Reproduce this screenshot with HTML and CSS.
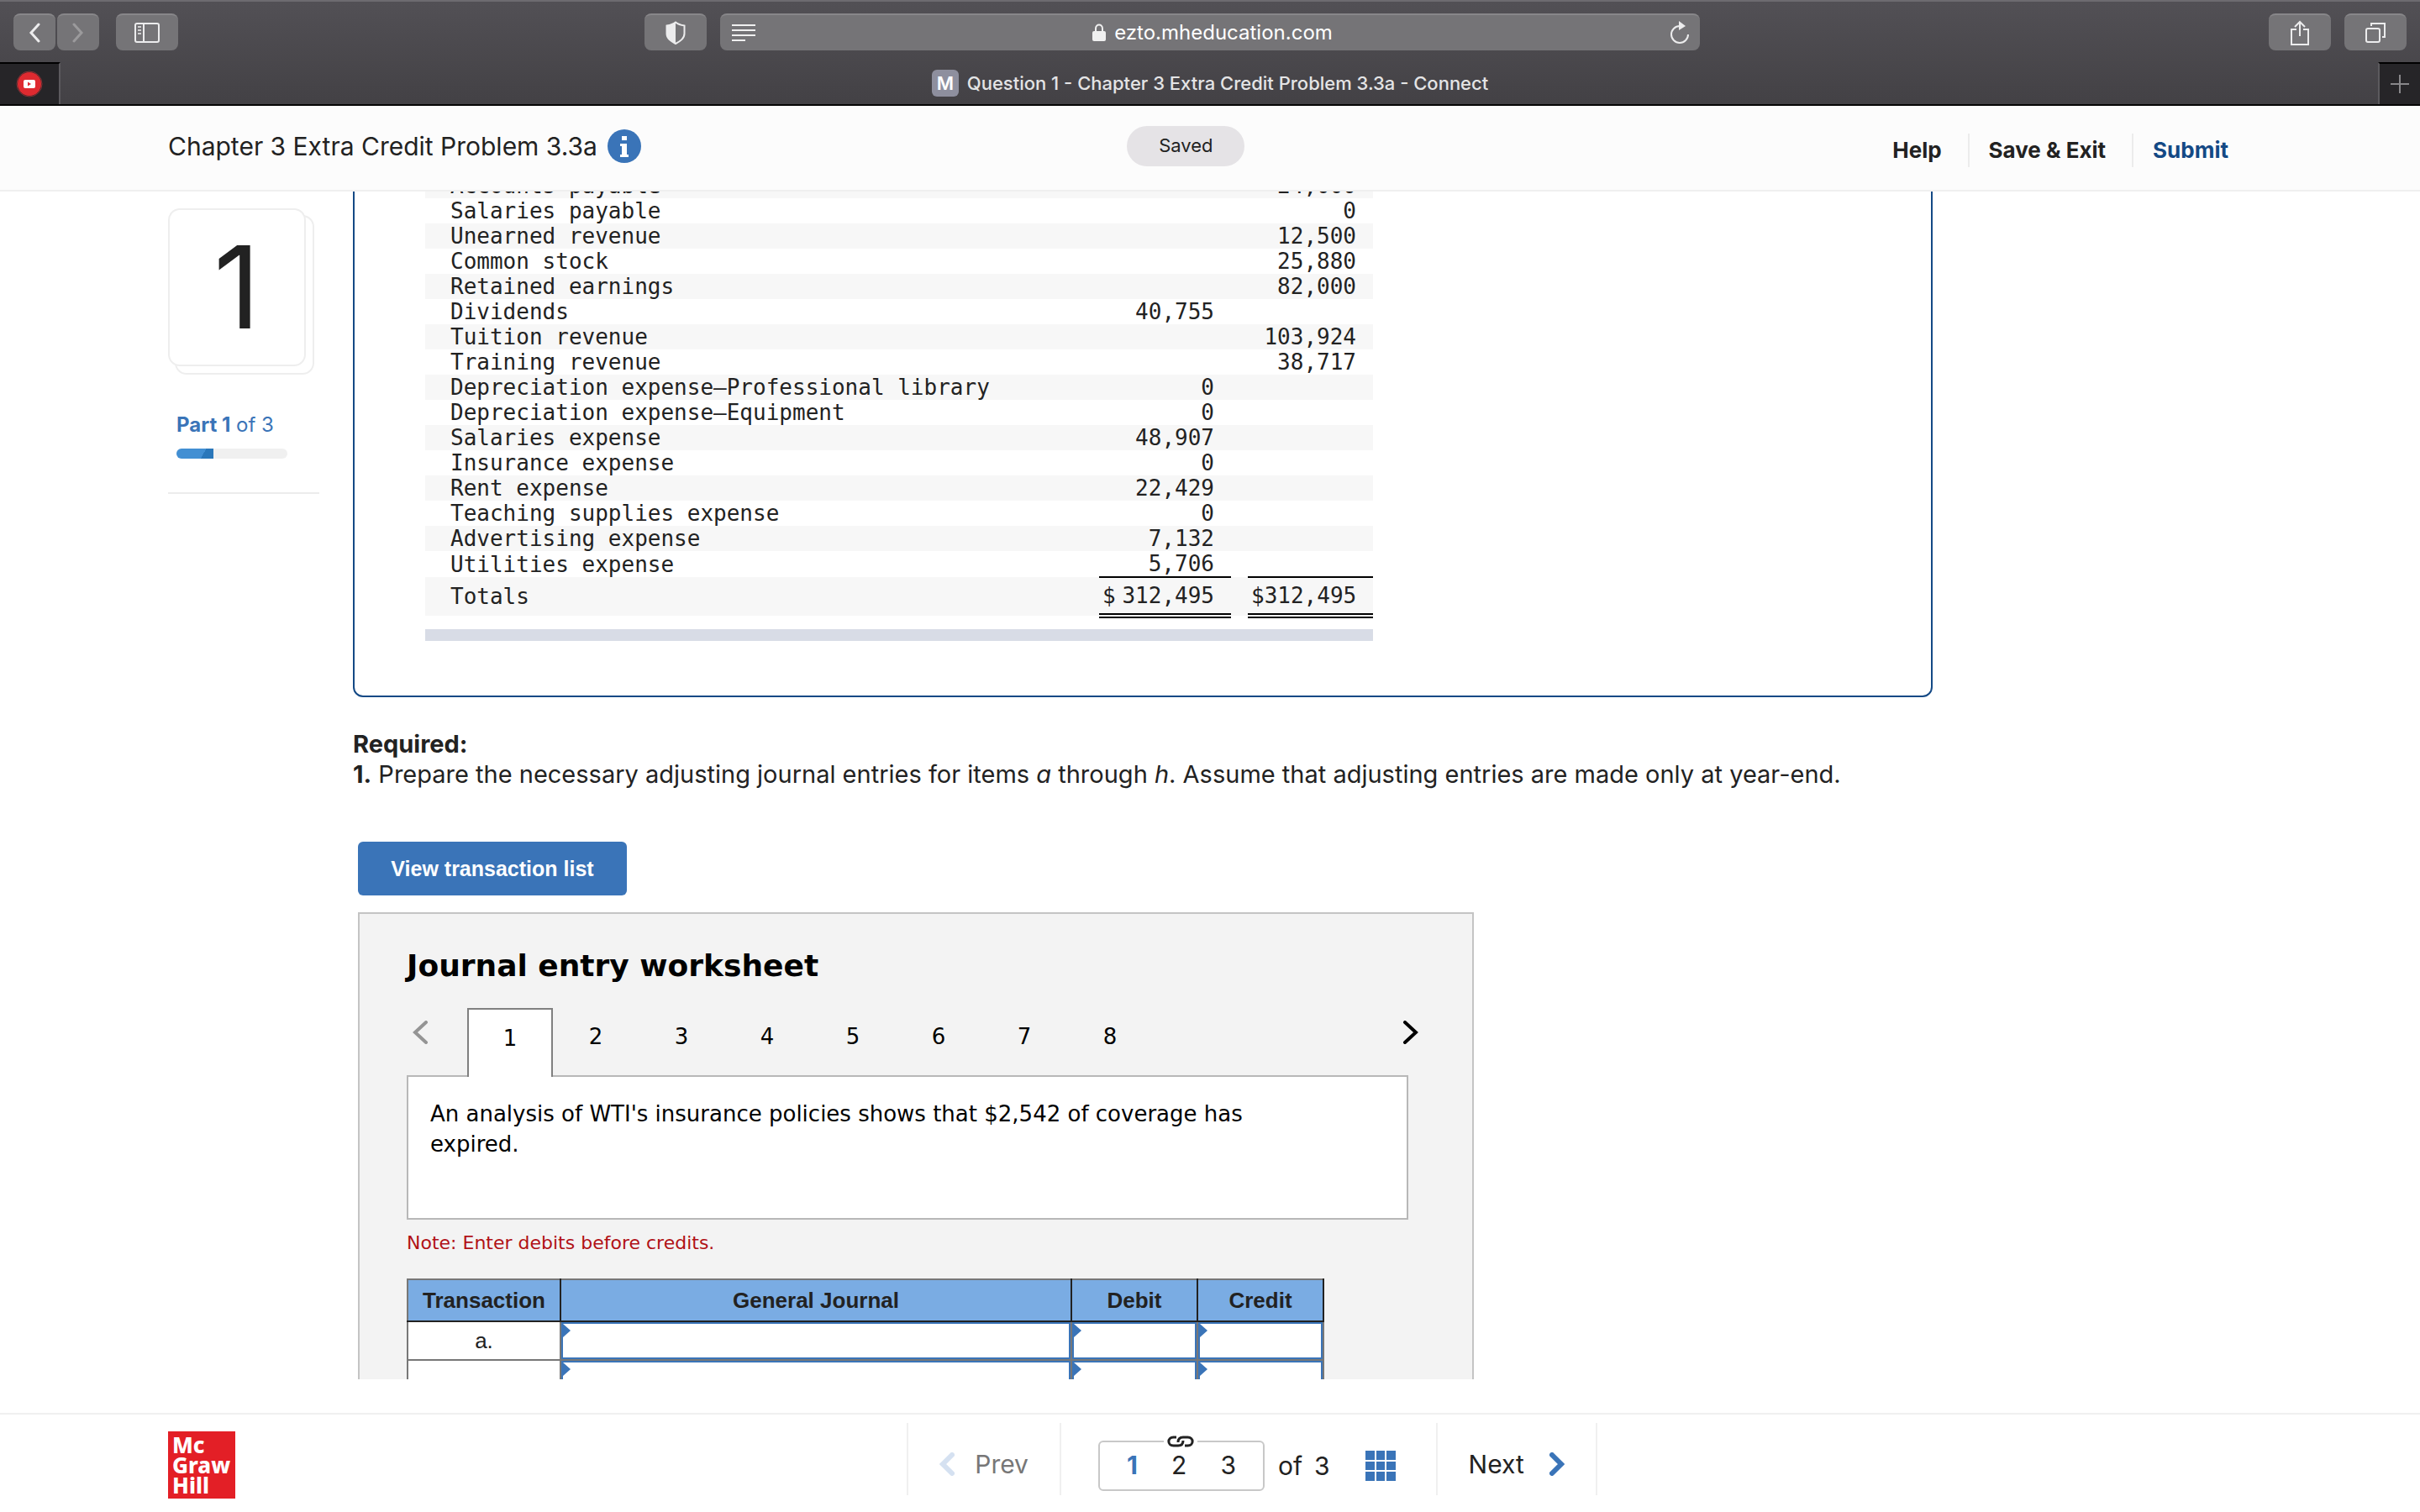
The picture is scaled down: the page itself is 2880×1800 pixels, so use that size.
FILE: index.html
```html
<!DOCTYPE html>
<html lang="en">
<head>
<meta charset="utf-8">
<title>Question 1 - Chapter 3 Extra Credit Problem 3.3a - Connect</title>
<link rel="stylesheet" href="styles.css">
</head>
<body>
<div class="chrome">
  <div class="toolbar">
    <div class="tools">
      <div class="pair">
        <button class="tool tool-small" aria-label="Back"><svg width="14" height="24" viewBox="0 0 14 24"><path d="M12 2L3 12l9 10" fill="none" stroke="#ececed" stroke-width="3" stroke-linecap="round"/></svg></button>
        <button class="tool tool-small" aria-label="Forward"><svg width="14" height="24" viewBox="0 0 14 24"><path d="M2 2l9 10-9 10" fill="none" stroke="#9b9a9c" stroke-width="3" stroke-linecap="round"/></svg></button>
      </div>
      <button class="tool" aria-label="Sidebar"><svg width="30" height="24" viewBox="0 0 30 24"><g fill="none" stroke="#ececed" stroke-width="2"><rect x="1" y="1" width="28" height="22" rx="2"/><path d="M11 1v22"/></g><path d="M4 5h4M4 9h4M4 13h4" stroke="#d0d0d1" stroke-width="2"/></svg></button>
      <button class="tool tool-end" aria-label="Privacy report"><svg width="24" height="28" viewBox="0 0 24 28"><path d="M12 1.500C15 4 19 5 22.500 5.500V15c0 6-5 9-10.500 12C6.500 24 1.500 21 1.500 15V5.500C5 5 9 4 12 1.500z" fill="none" stroke="#ececed" stroke-width="2"/><path d="M12 1.500V27C6.500 24 1.500 21 1.500 15V5.500C5 5 9 4 12 1.500z" fill="#ececed"/></svg></button>
    </div>
    <div class="address">
      <svg width="28" height="20" viewBox="0 0 28 20"><path d="M0 1h28M0 7h28M0 13h28M0 19h16" stroke="#f0f0f0" stroke-width="2"/></svg>
      <span class="host"><svg width="16" height="22" viewBox="0 0 16 22"><rect y="9" width="16" height="12" rx="2" fill="#f0f0f0"/><path d="M4 10V6c0-6 8-6 8 0v4" fill="none" stroke="#f0f0f0" stroke-width="2"/></svg>ezto.mheducation.com</span>
      <svg width="24" height="28" viewBox="0 0 24 28"><path d="M12 6a10 10 0 1 0 10 10" fill="none" stroke="#ececed" stroke-width="2"/><path d="M11 0l8 6-8 5z" fill="#ececed"/></svg>
    </div>
    <div class="tools tools-right">
      <button class="tool" aria-label="Share"><svg width="24" height="32" viewBox="0 0 24 32"><g fill="none" stroke="#ececed" stroke-width="2"><path d="M8 12H2v18h20V12h-6"/><path d="M12 20V3M6 9l6-6 6 6"/></g></svg></button>
      <button class="tool" aria-label="Tabs"><svg width="26" height="26" viewBox="0 0 26 26"><g fill="none" stroke="#ececed" stroke-width="2"><rect x="2" y="8" width="16" height="16" rx="2"/><path d="M8 5V2h16v16h-3"/></g></svg></button>
    </div>
  </div>
  <div class="tabbar">
    <div class="pinned"><svg width="32" height="32" viewBox="0 0 32 32"><circle cx="16" cy="16" r="15" fill="none" stroke="#8a3236" stroke-width="1"/><circle cx="16" cy="16" r="14" fill="#de2a30"/><rect x="9" y="11" width="14" height="10" rx="2" fill="#fff"/><path d="M14 13.500v5l4-2.500z" fill="#de2a30"/></svg></div>
    <div class="tab"><span class="favicon">M</span>Question 1 - Chapter 3 Extra Credit Problem 3.3a - Connect</div>
    <button class="newtab" aria-label="New tab"><svg width="22" height="22" viewBox="0 0 22 22"><path d="M11 0v22M0 11h22" stroke="#88878a" stroke-width="2"/></svg></button>
  </div>
</div>

<header class="header">
  <h1 class="title">Chapter 3 Extra Credit Problem 3.3a
    <svg width="40" height="40" viewBox="0 0 40 40"><circle cx="20" cy="20" r="20" fill="#3a74b8"/><path d="M17 8h6v5h-6zM15 17h8v13h2v3H15v-3h2V20h-2z" fill="#fff"/></svg></h1>
  <span class="saved">Saved</span>
  <nav class="links"><a href="#help">Help</a><a href="#save">Save &amp; Exit</a><a href="#submit" class="submit">Submit</a></nav>
</header>

<main class="main">
  <aside class="side">
    <div class="stack"><div class="number">1</div></div>
    <div class="part">
      <p><b>Part 1</b> of 3</p>
      <div class="track"><div class="fill"></div></div>
    </div>
  </aside>
  <div class="content">
    <section class="sheet">
      <table class="trial">
        <colgroup><col><col class="c-debit"><col class="c-gap"><col class="c-credit"></colgroup>
        <tbody>
        <tr><th>Accounts payable</th><td></td><td></td><td>24,000</td></tr>
        <tr><th>Salaries payable</th><td></td><td></td><td>0</td></tr>
        <tr><th>Unearned revenue</th><td></td><td></td><td>12,500</td></tr>
        <tr><th>Common stock</th><td></td><td></td><td>25,880</td></tr>
        <tr><th>Retained earnings</th><td></td><td></td><td>82,000</td></tr>
        <tr><th>Dividends</th><td>40,755</td><td></td><td></td></tr>
        <tr><th>Tuition revenue</th><td></td><td></td><td>103,924</td></tr>
        <tr><th>Training revenue</th><td></td><td></td><td>38,717</td></tr>
        <tr><th>Depreciation expense—Professional library</th><td>0</td><td></td><td></td></tr>
        <tr><th>Depreciation expense—Equipment</th><td>0</td><td></td><td></td></tr>
        <tr><th>Salaries expense</th><td>48,907</td><td></td><td></td></tr>
        <tr><th>Insurance expense</th><td>0</td><td></td><td></td></tr>
        <tr><th>Rent expense</th><td>22,429</td><td></td><td></td></tr>
        <tr><th>Teaching supplies expense</th><td>0</td><td></td><td></td></tr>
        <tr><th>Advertising expense</th><td>7,132</td><td></td><td></td></tr>
        <tr class="last"><th>Utilities expense</th><td class="line">5,706</td><td></td><td class="line"></td></tr>
        <tr class="totals"><th>Totals</th><td class="sum"><div class="money"><span>$</span><span>312,495</span></div></td><td></td><td class="sum"><div class="money"><span>$</span><span>312,495</span></div></td></tr>
        </tbody>
      </table>
      <div class="scrollbar"></div>
    </section>

    <section class="required">
      <p><b>Required:</b></p>
      <p><b>1.</b> Prepare the necessary adjusting journal entries for items <i>a</i> through <i>h</i>. Assume that adjusting entries are made only at year-end.</p>
    </section>

    <button class="view">View transaction list</button>

    <section class="worksheet">
      <h2>Journal entry worksheet</h2>
      <div class="tabs">
        <button class="arrow" aria-label="Previous entry"><svg width="20" height="28" viewBox="0 0 20 28"><path d="M17 2L4 14l13 12" fill="none" stroke="#949494" stroke-width="4" stroke-linecap="round"/></svg></button>
        <div class="entries">
          <button class="entry active">1</button><button class="entry">2</button><button class="entry">3</button><button class="entry">4</button><button class="entry">5</button><button class="entry">6</button><button class="entry">7</button><button class="entry">8</button>
        </div>
        <button class="arrow arrow-next" aria-label="Next entry"><svg width="20" height="28" viewBox="0 0 20 28"><path d="M3 2l13 12L3 26" fill="none" stroke="#000" stroke-width="4" stroke-linecap="round"/></svg></button>
      </div>
      <div class="prompt"><p>An analysis of WTI's insurance policies shows that $2,542 of coverage has expired.</p></div>
      <p class="note">Note: Enter debits before credits.</p>
      <table class="journal">
        <colgroup><col class="j-trans"><col><col class="j-amount"><col class="j-amount"></colgroup>
        <thead><tr><th>Transaction</th><th>General Journal</th><th>Debit</th><th>Credit</th></tr></thead>
        <tbody>
        <tr><td>a.</td><td class="cell"><input aria-label="Account, line 1"></td><td class="cell"><input aria-label="Debit, line 1"></td><td class="cell"><input aria-label="Credit, line 1"></td></tr>
        <tr><td></td><td class="cell"><input aria-label="Account, line 2"></td><td class="cell"><input aria-label="Debit, line 2"></td><td class="cell"><input aria-label="Credit, line 2"></td></tr>
        </tbody>
      </table>
    </section>
  </div>
</main>

<footer class="footer">
  <div class="logo">Mc<br>Graw<br>Hill</div>
  <nav class="pager">
    <button class="step step-prev" disabled><svg width="18" height="28" viewBox="0 0 18 28"><path d="M15 3L4 14l11 11" fill="none" stroke="#d5e1f1" stroke-width="6" stroke-linecap="round"/></svg>Prev</button>
    <div class="pages">
      <div class="group">
        <a href="#1" class="current">1</a><a href="#2">2</a><a href="#3">3</a>
        <span class="link"><svg width="32" height="14" viewBox="0 0 32 14"><path d="M11 2H7.500C0 2 0 12 7.500 12H13c4 0 6-2.500 6-6M21 12h3.500C32 12 32 2 24.500 2H19c-4 0-6 2.500-6 6" fill="none" stroke="#222" stroke-width="3"/></svg></span>
      </div>
      <span class="of">of</span><span>3</span>
      <button class="grid" aria-label="All questions"><svg width="36" height="36" viewBox="0 0 36 36" fill="#3a74b8"><path d="M0 0h11v11H0zM13 0h10v11H13zM25 0h11v11H25zM0 13h11v10H0zM13 13h10v10H13zM25 13h11v10H25zM0 25h11v11H0zM13 25h10v11H13zM25 25h11v11H25z"/></svg></button>
    </div>
    <button class="step step-next">Next<svg width="18" height="28" viewBox="0 0 18 28"><path d="M3 3l11 11L3 25" fill="none" stroke="#3a74b8" stroke-width="6" stroke-linecap="round"/></svg></button>
  </nav>
</footer>
</body>
</html>
```
FILE: styles.css
```css
* { box-sizing: border-box; margin: 0; padding: 0; }
svg { display: block; flex: none; }
button { font: inherit; color: inherit; background: none; border: 0; }
a { color: inherit; text-decoration: none; }

body {
  height: 100vh;
  display: flex;
  flex-direction: column;
  overflow: hidden;
  background: #fff;
  color: #222;
  font-family: Inter, "Open Sans", sans-serif;
  font-size: 29px;
  line-height: 36px;
}

/* Browser window */
.chrome {
  flex: none;
  background: linear-gradient(#525055, #434145);
  border-top: 2px solid #6d6b70;
  border-bottom: 2px solid #050505;
  color: #fff;
}
.toolbar {
  display: grid;
  grid-template-columns: 1fr minmax(0, 1166px) 1fr;
  gap: 16px;
  padding: 14px 16px;
}
.tools { display: flex; gap: 20px; }
.tools-right { justify-content: flex-end; gap: 16px; }
.pair { display: flex; gap: 2px; }
.tool {
  width: 74px;
  height: 44px;
  display: flex;
  align-items: center;
  justify-content: center;
  background: #757477;
  border-top: 2px solid #88878a;
  border-radius: 8px;
}
.tool-small { width: 50px; }
.tool-end { margin-left: auto; }
.address {
  height: 44px;
  display: flex;
  align-items: center;
  justify-content: space-between;
  padding: 0 12px 0 14px;
  background: #757477;
  border-top: 2px solid #88878a;
  border-radius: 8px;
  font-size: 24px;
}
.host { display: flex; align-items: center; gap: 10px; }
.tabbar { display: flex; height: 50px; }
.pinned {
  width: 72px;
  display: flex;
  align-items: center;
  justify-content: center;
  background: #262528;
  border-top: 2px solid #000;
  border-right: 2px solid #5c5a5e;
}
.tab {
  flex: 1;
  display: flex;
  align-items: center;
  justify-content: center;
  gap: 10px;
  padding-right: 22px;
  font-size: 22px;
  font-weight: 500;
  color: #e4e4e5;
}
.favicon {
  width: 32px;
  height: 32px;
  border-radius: 6px;
  background: #8e8f9e;
  color: #fff;
  font-weight: 600;
  line-height: 32px;
  text-align: center;
}
.newtab {
  width: 50px;
  display: flex;
  align-items: center;
  justify-content: center;
  background: #262528;
  border-top: 2px solid #000;
  border-left: 2px solid #5c5a5e;
}

/* Assignment header */
.header {
  flex: none;
  display: grid;
  grid-template-columns: minmax(0, 39fr) auto minmax(0, 40fr);
  align-items: center;
  height: 102px;
  padding: 0 228px 4px 200px;
  background: #fcfcfc;
  border-bottom: 2px solid #efefef;
}
.title { display: flex; align-items: center; gap: 12px; font-size: 30px; font-weight: 400; }
.saved {
  width: 140px;
  height: 48px;
  border-radius: 24px;
  background: #e5e3e6;
  font-size: 22px;
  line-height: 46px;
  text-align: center;
}
.links { display: flex; justify-content: flex-end; font-size: 26px; font-weight: 700; line-height: 40px; padding-top: 10px; }
.links a + a { margin-left: 31px; padding-left: 23px; border-left: 2px solid #ececec; }
.submit { color: #144985; }

/* Question area */
.main {
  flex: 1;
  min-height: 0;
  display: flex;
  gap: 40px;
  overflow: hidden;
  margin-bottom: 40px;
  padding: 0 200px;
}
.side { flex: none; width: 180px; padding-top: 20px; }
.stack { position: relative; height: 198px; }
.stack::before {
  content: "";
  position: absolute;
  inset: 8px 6px 0 8px;
  border: 2px solid #eee;
  border-radius: 14px;
}
.number {
  position: relative;
  width: 164px;
  height: 188px;
  border: 2px solid #eee;
  border-radius: 14px;
  background: #fff;
  font-size: 136px;
  line-height: 184px;
  text-align: center;
}
.part { padding: 42px 10px 40px; border-bottom: 2px solid #ececec; color: #3a74b8; font-size: 24px; }
.track { width: 132px; height: 12px; margin-top: 10px; border-radius: 6px; background: #f0f0f0; overflow: hidden; }
.fill { width: 33%; height: 100%; background: linear-gradient(120deg, #428fd3 70%, #2a77ba 70%); }

.content { flex: 1; min-width: 0; max-width: 1880px; }
.sheet {
  margin-top: -24px;
  padding: 0 84px 65px;
  border: 2px solid #144985;
  border-radius: 12px;
}
.trial {
  width: 1128px;
  table-layout: fixed;
  border-collapse: collapse;
  font-family: "DejaVu Sans Mono", monospace;
  font-size: 26px;
  line-height: 30px;
}
.c-debit { width: 157px; }
.c-gap { width: 20px; }
.c-credit { width: 149px; }
.trial tr { height: 30px; }
.trial tr:nth-child(odd) { background: #f7f7f7; }
.trial th { padding-left: 30px; font-weight: 400; text-align: left; white-space: nowrap; }
.trial td { padding-right: 20px; text-align: right; }
.trial .last { height: 31px; }
.trial .totals { height: 46px; }
.trial .line { border-bottom: 2px solid #000; }
.trial .sum { border-bottom: 6px double #000; padding-left: 4px; }
.money { display: flex; justify-content: space-between; }
.scrollbar { width: 1128px; height: 14px; margin-top: 13px; background: #d8dce6; }

.required { margin-top: 38px; }
.view {
  display: block;
  margin: 62px 0 0 6px;
  width: 320px;
  height: 64px;
  border-radius: 6px;
  background: #3a74b8;
  color: #fff;
  font-family: "Liberation Sans", Arial, sans-serif;
  font-size: 25px;
  font-weight: 700;
}

.worksheet {
  width: 1328px;
  margin: 20px 0 0 6px;
  padding: 40px 76px 40px 56px;
  border: 2px solid #c4c4c4;
  background: #f3f3f3;
  color: #000;
  font-family: Verdana, "DejaVu Sans", sans-serif;
  font-size: 26px;
}
.worksheet h2 { font-size: 36px; line-height: 44px; }
.tabs { display: flex; height: 80px; margin-top: 28px; }
.arrow { flex: none; width: 72px; padding: 0 0 22px 6px; }
.arrow-next { width: 20px; padding-left: 0; margin-left: auto; margin-right: -13px; }
.entries { display: flex; }
.entry { width: 102px; height: 80px; padding-bottom: 12px; }
.active {
  position: relative;
  height: 82px;
  border: 2px solid #808080;
  border-bottom: 0;
  background: #fff;
}
.prompt { height: 172px; padding: 26px; border: 2px solid #b8b8b8; background: #fff; }
.prompt p { max-width: 1020px; }
.note { margin-top: 10px; color: #b11116; font-size: 22px; }
.journal {
  width: 1092px;
  margin-top: 24px;
  table-layout: fixed;
  border-collapse: collapse;
  border: 2px solid #777;
  color: #222;
  font-family: "Liberation Sans", Arial, sans-serif;
}
.j-trans { width: 182px; }
.j-amount { width: 150px; }
.journal th { height: 50px; border: 2px solid #222; border-top-color: #777; background: #7aace3; }
.journal th:first-child { border-left-color: #777; }
.journal td { height: 46px; border: 2px solid #777; background: #fff; text-align: center; }
.journal tbody tr:first-child td { border-top-color: #222; }
.journal .cell { position: relative; }
.cell input {
  display: block;
  width: 100%;
  height: 44px;
  border: 2px solid #3a74b8;
  background: #fff;
  font: inherit;
}
.cell::before {
  content: "";
  position: absolute;
  left: 2px;
  top: 2px;
  border: solid transparent;
  border-width: 8px 0 8px 9px;
  border-left-color: #3a74b8;
}

/* Footer */
.footer {
  flex: none;
  display: flex;
  align-items: center;
  height: 118px;
  padding: 0 180px 0 200px;
  border-top: 2px solid #f0f0f0;
}
.logo {
  width: 80px;
  height: 80px;
  margin-top: 4px;
  padding: 4px 5px;
  background: #e31f26;
  color: #fff;
  font-family: "Noto Sans", "Open Sans", sans-serif;
  font-size: 26px;
  font-weight: 800;
  line-height: 24px;
}
.pager {
  display: flex;
  align-self: flex-end;
  height: 86px;
  margin: 0 auto 20px;
  border-left: 2px solid #f0f0f0;
  font-size: 30px;
  line-height: 50px;
}
.step { display: flex; align-items: flex-start; padding: 24px 37px 0; border-right: 2px solid #f0f0f0; }
.step svg { margin-top: 11px; }
.step-prev { gap: 24px; color: #777; }
.step-next { gap: 30px; }
.pages { display: flex; align-items: center; padding: 16px 48px 0 44px; border-right: 2px solid #f0f0f0; }
.group {
  position: relative;
  width: 198px;
  height: 60px;
  display: flex;
  justify-content: space-around;
  padding: 2px 12px;
  border: 2px solid #c8c8c8;
  border-radius: 6px;
}
.current { color: #3a74b8; font-weight: 700; }
.link { position: absolute; top: -8px; left: 76px; padding: 0 4px; background: #fff; }
.of { margin: 0 14px 0 16px; }
.grid { margin-left: 42px; }
```
